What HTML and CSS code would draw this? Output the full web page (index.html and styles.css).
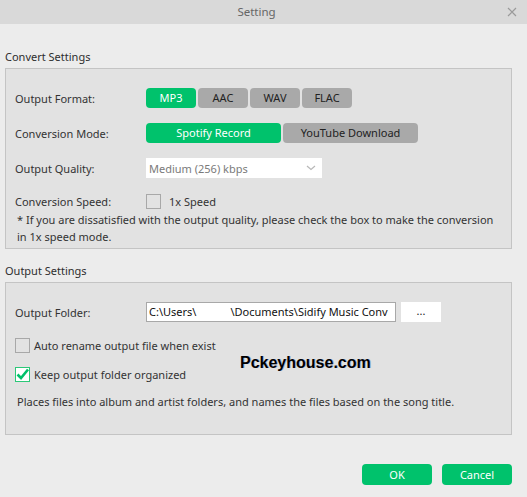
FILE: index.html
```html
<!DOCTYPE html>
<html>
<head>
<meta charset="utf-8">
<link rel="stylesheet" href="styles.css">
</head>
<body>
<div class="window">
  <div class="titlebar">
    <span class="title">Setting</span>
    <svg class="close" width="10" height="10" viewBox="0 0 10 10"><path d="M1 1L9 9M9 1L1 9" stroke="#9a9a9a" stroke-width="1.2" fill="none"/></svg>
  </div>
  <div class="content">
    <div class="heading">Convert Settings</div>
    <div class="box box1">
      <div class="row r1">
        <div class="label">Output Format:</div>
        <div class="btns">
          <span class="seg on w50">MP3</span>
          <span class="seg off w50">AAC</span>
          <span class="seg off w50">WAV</span>
          <span class="seg off w50">FLAC</span>
        </div>
      </div>
      <div class="row r2">
        <div class="label">Conversion Mode:</div>
        <div class="btns">
          <span class="seg on w135">Spotify Record</span>
          <span class="seg off w135">YouTube Download</span>
        </div>
      </div>
      <div class="row r3">
        <div class="label">Output Quality:</div>
        <div class="select">
          <span class="seltext">Medium (256) kbps</span>
          <svg width="10" height="6" viewBox="0 0 10 6"><path d="M1 1L5 4.5L9 1" stroke="#b8b8b8" stroke-width="1.2" fill="none"/></svg>
        </div>
      </div>
      <div class="row r4">
        <div class="label">Conversion Speed:</div>
        <span class="check"></span>
        <span class="checklabel speed">1x Speed</span>
      </div>
      <div class="note">* If you are dissatisfied with the output quality, please check the box to make the conversion in 1x speed mode.</div>
    </div>
    <div class="heading h2">Output Settings</div>
    <div class="box box2">
      <div class="row r5">
        <div class="label">Output Folder:</div>
        <div class="folder">C:\Users\<span class="blank"></span>\Documents\Sidify Music Conv</div>
        <span class="browse">...</span>
      </div>
      <div class="row r6">
        <span class="check"></span>
        <span class="checklabel">Auto rename output file when exist</span>
      </div>
      <div class="row r7">
        <span class="check checked"><svg width="15" height="15" viewBox="0 0 15 15"><path d="M2.5 7.5L6 11L13 2.5" stroke="#00c06a" stroke-width="2.6" fill="none"/></svg></span>
        <span class="checklabel">Keep output folder organized</span>
      </div>
      <div class="desc">Places files into album and artist folders, and names the files based on the song title.</div>
      <div class="watermark">Pckeyhouse.com</div>
    </div>
    <div class="footer">
      <span class="gbtn">OK</span>
      <span class="gbtn">Cancel</span>
    </div>
  </div>
</div>
</body>
</html>
```
FILE: styles.css
```css
html, body {
  margin: 0;
  padding: 0;
}
body {
  width: 527px;
  height: 497px;
  background: #ececec;
  font-family: "Noto Sans", "Open Sans", sans-serif;
  font-size: 11px;
  color: #333333;
  overflow: hidden;
}
.window {
  width: 527px;
  height: 497px;
}
.titlebar {
  height: 24px;
  background: #d9d9d9;
  display: flex;
  align-items: center;
  justify-content: center;
  padding-right: 14px;
  position: relative;
}
.title {
  color: #666666;
  font-size: 11.5px;
  line-height: 22px;
}
.close {
  position: absolute;
  right: 10px;
  top: 7px;
}
.content {
  padding: 24px 15px 0 5px;
}
.heading {
  height: 18px;
  line-height: 18px;
  margin-bottom: 2px;
  color: #2e2e2e;
}
.h2 {
  margin-top: 13px;
}
.box {
  border: 1px solid #c4c4c4;
  background: #e2e2e2;
  position: relative;
}
.box1 {
  padding: 19px 0 3px 9px;
}
.box2 {
  padding: 19px 0 23px 9px;
}
.row {
  display: flex;
  align-items: center;
}
.label {
  width: 131px;
  flex: none;
}
.r1, .r2, .r3 {
  height: 20px;
  margin-bottom: 15px;
}
.r4 {
  height: 16px;
}
.btns {
  display: flex;
  gap: 2px;
}
.seg {
  height: 20px;
  line-height: 20px;
  text-align: center;
  border-radius: 4px;
}
.w50 { width: 50px; }
.w135 { width: 135px; }
.on {
  background: #00c26c;
  color: #ffffff;
}
.off {
  background: #a9a9a9;
  color: #222;
}
.select {
  width: 176px;
  height: 20px;
  background: #fff;
  display: flex;
  align-items: center;
  justify-content: space-between;
  padding: 0 6px 0 3px;
  box-sizing: border-box;
}
.seltext {
  color: #7a7a7a;
}
.check {
  width: 15px;
  height: 15px;
  box-sizing: border-box;
  border: 1px solid #a8a8a8;
  background: transparent;
  display: inline-block;
  flex: none;
  position: relative;
}
.check.checked {
  border-color: #2cc878;
  background: #fff;
}
.check svg {
  position: absolute;
  left: -1px;
  top: -1px;
}
.checklabel {
  margin-left: 4px;
}
.speed {
  margin-left: 8px;
}
.note {
  margin-top: 2px;
  line-height: 17px;
  padding-left: 2px;
  padding-right: 10px;
}
.r5 {
  height: 20px;
}
.folder {
  width: 250px;
  height: 20px;
  line-height: 18px;
  box-sizing: border-box;
  border: 1px solid #a8a8a8;
  background: #fff;
  padding-left: 2px;
  overflow: hidden;
  white-space: nowrap;
  color: #111;
  flex: none;
}
.blank {
  display: inline-block;
  width: 34px;
}
.browse {
  width: 40px;
  height: 20px;
  line-height: 18px;
  background: #fff;
  text-align: center;
  margin-left: 5px;
  color: #222;
}
.r6 {
  height: 15px;
  margin-top: 16px;
}
.r7 {
  height: 15px;
  margin-top: 14px;
}
.desc {
  margin-top: 11px;
  line-height: 18px;
  padding-left: 2px;
}
.watermark {
  position: absolute;
  left: 234px;
  top: 71px;
  font-family: "Liberation Sans", Arial, sans-serif;
  font-weight: bold;
  font-size: 16px;
  color: #000;
  text-shadow: 1px 0 0 rgba(40, 90, 200, 0.35);
}
.footer {
  display: flex;
  justify-content: flex-end;
  gap: 10px;
  margin-top: 29px;
}
.gbtn {
  width: 70px;
  height: 21px;
  line-height: 21px;
  text-align: center;
  background: #00c26c;
  color: #fff;
  border-radius: 4px;
}
```
